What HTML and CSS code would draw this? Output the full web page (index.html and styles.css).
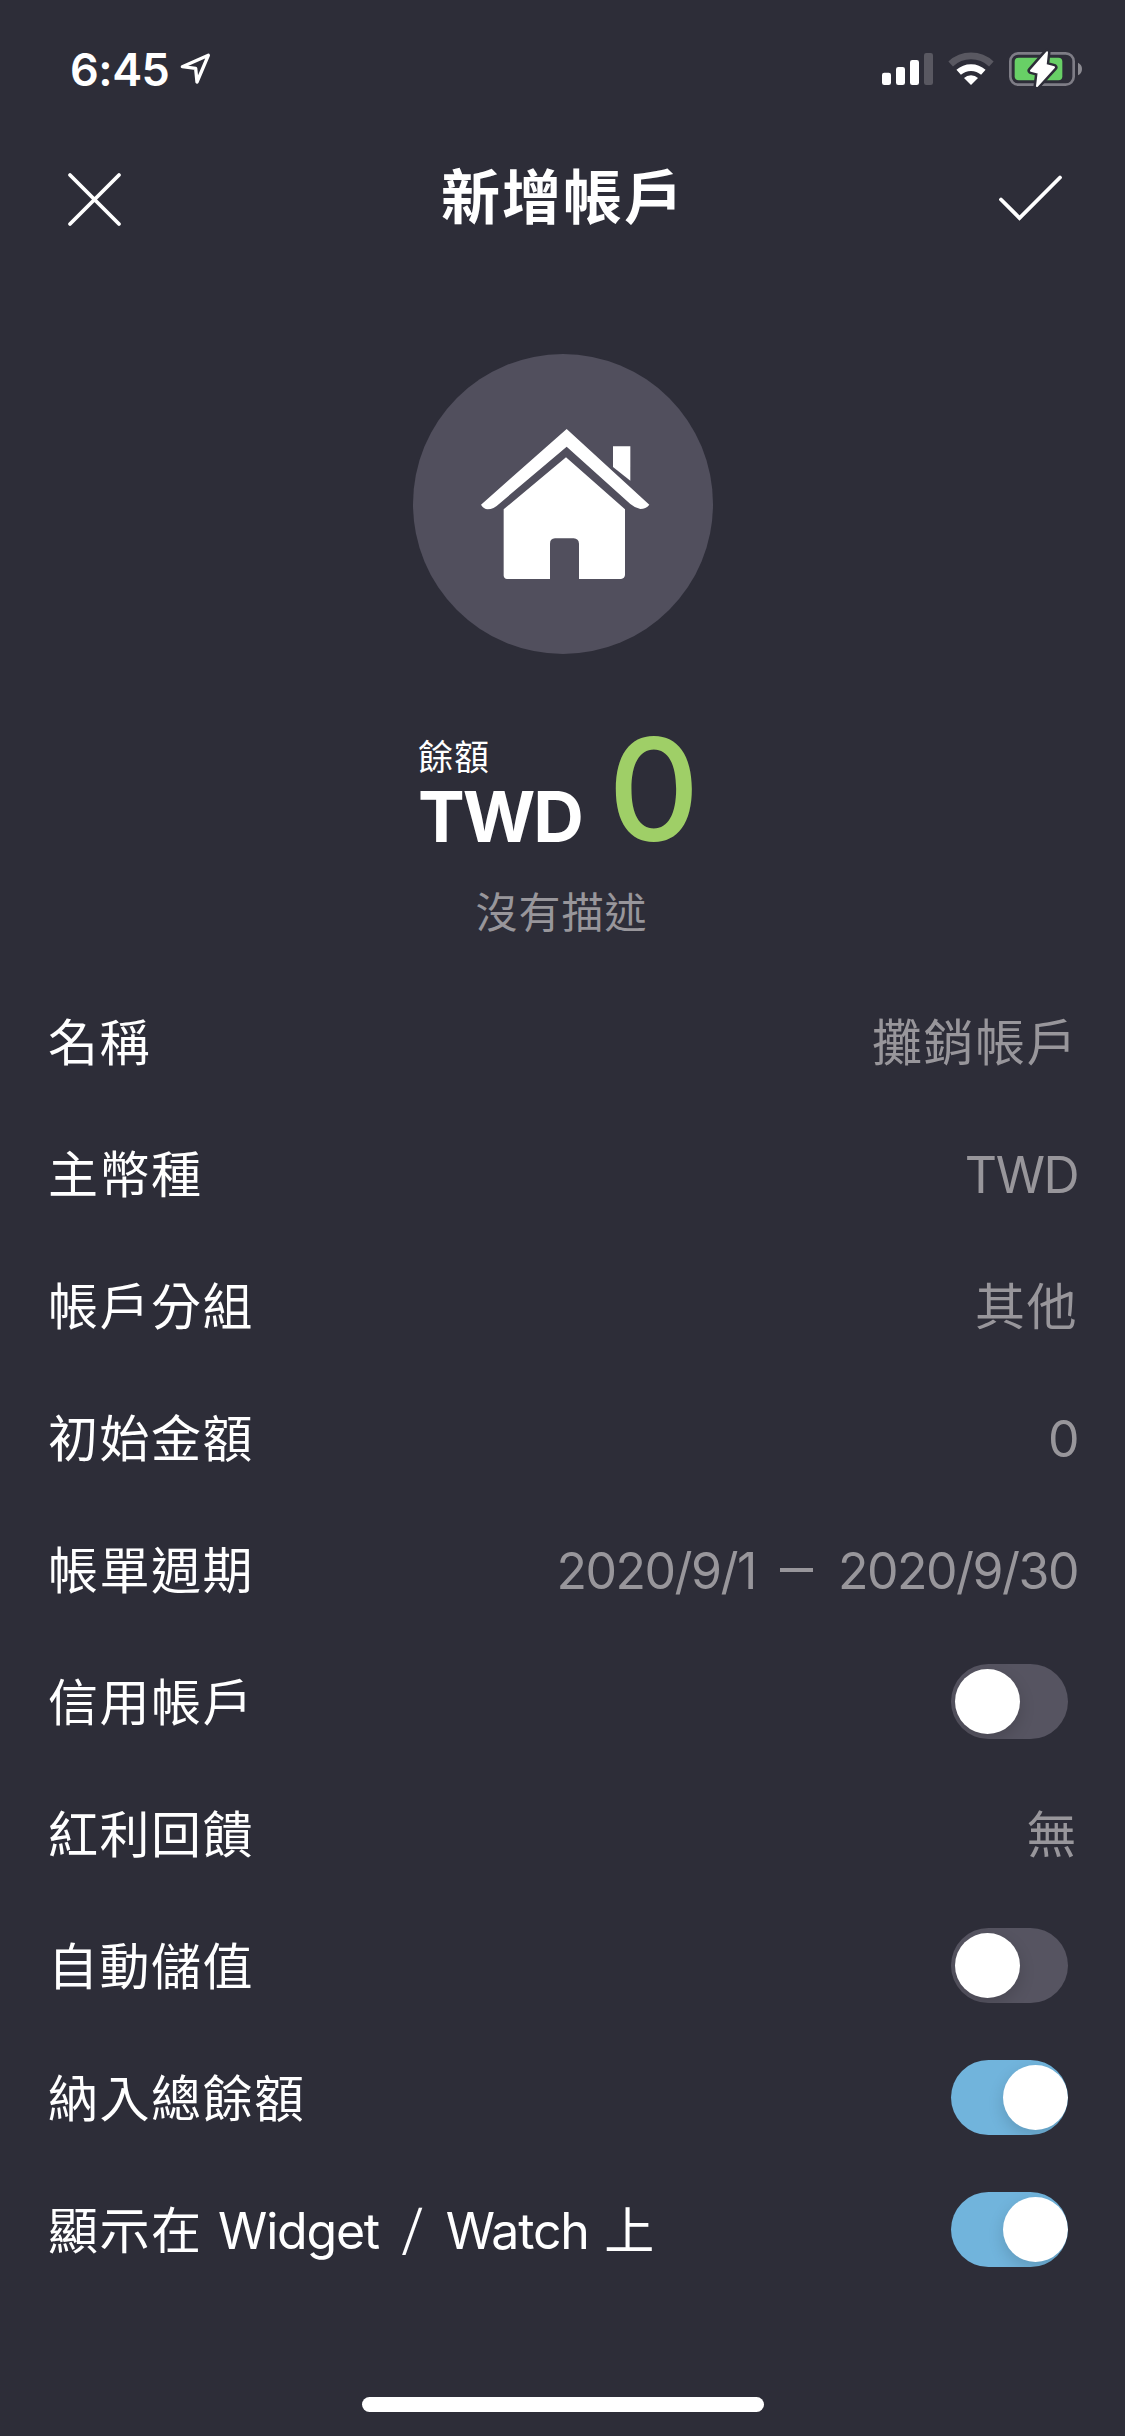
FILE: index.html
```html
<!DOCTYPE html>
<html lang="zh-Hant">
<head>
    <meta charset="UTF-8">
    <meta name="viewport" content="width=device-width, initial-scale=1.0">
    <title>新增帳戶</title>
    <link rel="stylesheet" href="styles.css">
</head>
<body>
    <div class="status-bar">
        <div class="status-left">
            <span class="time">6:45</span>
            <svg class="location" viewBox="420 66 96 102">
                <path d="M427 110 L505 76 L471 156 L467 115 Z" fill="none" stroke="#fff" stroke-width="10" stroke-linejoin="round"/>
            </svg>
        </div>
        <svg class="status-icons" viewBox="0 0 750 240">
            <!-- signal -->
            <rect x="66" y="128" width="27" height="37" rx="7" fill="#fff"/>
            <rect x="108" y="111" width="27" height="54" rx="7" fill="#fff"/>
            <rect x="150" y="90" width="27" height="75" rx="7" fill="#fff"/>
            <rect x="192" y="69" width="27" height="96" rx="7" fill="#595861"/>
            <!-- wifi -->
            <path d="M272 102 A89 89 0 0 1 394 102" fill="none" stroke="#595861" stroke-width="20"/>
            <path d="M296 127 A55 55 0 0 1 370 127" fill="none" stroke="#fff" stroke-width="20"/>
            <path d="M333 165 L312 144 A30 30 0 0 1 354 144 Z" fill="#fff"/>
            <!-- battery -->
            <rect x="451" y="70" width="190" height="94" rx="24" fill="none" stroke="#7e7d86" stroke-width="8"/>
            <rect x="464" y="83" width="143" height="68" rx="12" fill="#68d066"/>
            <path d="M654 98 Q666 104 666 117 Q666 130 654 136 Z" fill="#8b8a91"/>
            <path d="M561 67 L513 122 L536 128 L531 168 L582 112 L557 105 Z" fill="#2d2d38" stroke="#2d2d38" stroke-width="21" stroke-linejoin="round"/>
            <path d="M561 67 L513 122 L536 128 L531 168 L582 112 L557 105 Z" fill="#fff" stroke="#fff" stroke-width="6" stroke-linejoin="round"/>
        </svg>
    </div>

    <div class="header">
        <svg class="close" viewBox="0 0 60 60">
            <path d="M5 7 L54 56 M54 7 L5 56" fill="none" stroke="#fff" stroke-width="3.8" stroke-linecap="round"/>
        </svg>
        <h1 class="title">新增帳戶</h1>
        <svg class="confirm" viewBox="0 0 70 60">
            <path d="M6 31.5 L24.5 50 L65 9.500" fill="none" stroke="#fff" stroke-width="3.8" stroke-linecap="round"/>
        </svg>
    </div>

    <div class="avatar">
        <svg viewBox="38 41 900 900">
            <path fill="#fff" d="M499 266 L747 493 C740 502 731 506 720 506 Q704 503 690 491 L499 319 L296 491 Q280 507 262 507 Q250 506 242 493 Z"/>
            <path fill="#fff" d="M638 318 H690 V421 L638 380 Z"/>
            <path fill="#fff" d="M497 351 L674 507 V704 Q673 715 662 716 H536 V610 Q535 595 520 594 H464 Q449 595 449 610 V716 H320 Q311 715 310 706 V507 Z"/>
        </svg>
    </div>

    <div class="balance">
        <div class="balance-info">
            <span class="balance-label">餘額</span>
            <span class="balance-currency">TWD</span>
        </div>
        <span class="balance-amount">0</span>
    </div>
    <p class="description">沒有描述</p>

    <div class="list">
        <div class="row"><span class="label">名稱</span><span class="value">攤銷帳戶</span></div>
        <div class="row"><span class="label">主幣種</span><span class="value latin">TWD</span></div>
        <div class="row"><span class="label">帳戶分組</span><span class="value">其他</span></div>
        <div class="row"><span class="label">初始金額</span><span class="value latin">0</span></div>
        <div class="row"><span class="label">帳單週期</span><span class="value latin">2020/9/1<span class="dash">–</span>2020/9/30</span></div>
        <div class="row"><span class="label">信用帳戶</span><span class="toggle"><span class="knob"></span></span></div>
        <div class="row"><span class="label">紅利回饋</span><span class="value">無</span></div>
        <div class="row"><span class="label">自動儲值</span><span class="toggle"><span class="knob"></span></span></div>
        <div class="row"><span class="label">納入總餘額</span><span class="toggle on"><span class="knob"></span></span></div>
        <div class="row"><span class="label">顯示在 <span class="latin">Widget<span class="slash">/</span>Watch</span> 上</span><span class="toggle on"><span class="knob"></span></span></div>
    </div>

    <div class="home-indicator"></div>
</body>
</html>
```
FILE: styles.css
```css
* {
    box-sizing: border-box;
}
body {
    margin: 0;
    width: 1125px;
    height: 2436px;
    overflow: hidden;
    background-color: #2d2d38;
    color: #fff;
    font-family: Inter, "Noto Sans CJK TC", sans-serif;
}
svg {
    display: block;
}
.status-bar {
    display: flex;
    justify-content: space-between;
    align-items: center;
    height: 138px;
    padding: 0 15px 0 70px;
}
.status-left {
    display: flex;
    align-items: center;
    gap: 11px;
}
.time {
    font-size: 45px;
    font-weight: 600;
    letter-spacing: -0.5px;
}
.location {
    width: 32px;
    height: 34px;
}
.status-icons {
    width: 250px;
    height: 80px;
    margin-top: 2px;
}
.header {
    display: flex;
    justify-content: space-between;
    align-items: center;
    height: 120px;
    padding: 0 60px 0 65px;
}
.close {
    width: 60px;
    height: 60px;
}
.confirm {
    width: 70px;
    height: 60px;
}
.title {
    margin: 0 0 0 6px;
    font-size: 59px;
    font-weight: 700;
    line-height: 80px;
    letter-spacing: 2px;
}
.avatar {
    width: 300px;
    height: 300px;
    margin: 96px auto 0 413px;
    border-radius: 50%;
    background-color: #514f5d;
}
.balance {
    display: flex;
    gap: 26px;
    margin-top: 75px;
    padding-left: 418px;
}
.balance-info {
    display: flex;
    flex-direction: column;
}
.balance-label {
    font-size: 35px;
    line-height: 56px;
    letter-spacing: 1px;
}
.balance-currency {
    font-size: 70px;
    font-weight: 700;
    line-height: 63px;
    letter-spacing: -2px;
}
.balance-amount {
    font-size: 142px;
    font-weight: 500;
    line-height: 120px;
    color: #9fcf67;
}
.description {
    margin: 34px 2px 32px 0;
    font-size: 42px;
    line-height: 60px;
    letter-spacing: 1px;
    text-align: center;
    color: #98969b;
}
.row {
    display: flex;
    justify-content: space-between;
    align-items: center;
    height: 132px;
    padding: 0 47px 0 48px;
}
.label, .value {
    padding-top: 3px;
    font-size: 50px;
    line-height: 70px;
    letter-spacing: 1.5px;
}
.value {
    color: #98969b;
}
.latin {
    font-size: 50px;
    letter-spacing: -1.2px;
}
.value.latin {
    padding-top: 4px;
    letter-spacing: -1.5px;
}
.value .dash {
    margin: 0 25px 0 24px;
    font-size: 66px;
    font-weight: 300;
    line-height: 1px;
    letter-spacing: 0;
    vertical-align: -2px;
}
.slash {
    display: inline-block;
    margin: 0 24px;
    font-size: 54px;
    font-weight: 300;
    line-height: 1px;
    letter-spacing: 0;
    transform: skewX(-5deg);
}
.toggle {
    display: flex;
    align-items: center;
    width: 117px;
    height: 75px;
    margin-right: 10px;
    padding-left: 4px;
    border-radius: 38px;
    overflow: hidden;
    background-color: #565461;
}
.toggle.on {
    justify-content: flex-end;
    background-color: #71b4dc;
}
.knob {
    width: 65px;
    height: 65px;
    border-radius: 50%;
    background-color: #fff;
    box-shadow: 0 6px 16px rgba(0, 0, 0, 0.15);
}
.home-indicator {
    width: 402px;
    height: 15px;
    margin: 102px 0 0 362px;
    border-radius: 8px;
    background-color: #fff;
}
```
